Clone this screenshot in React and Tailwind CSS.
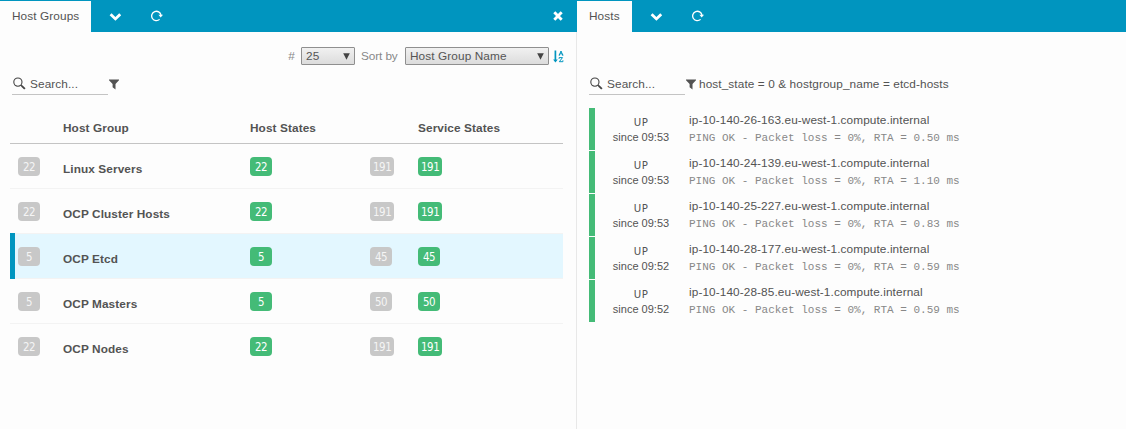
import React from "react";

const groups = [
  { name: "Linux Servers", hosts: 22, services: 191 },
  { name: "OCP Cluster Hosts", hosts: 22, services: 191 },
  { name: "OCP Etcd", hosts: 5, services: 45, active: true },
  { name: "OCP Masters", hosts: 5, services: 50 },
  { name: "OCP Nodes", hosts: 22, services: 191 },
];

const hosts = [
  { name: "ip-10-140-26-163.eu-west-1.compute.internal", since: "09:53", rta: "0.50" },
  { name: "ip-10-140-24-139.eu-west-1.compute.internal", since: "09:53", rta: "1.10" },
  { name: "ip-10-140-25-227.eu-west-1.compute.internal", since: "09:53", rta: "0.83" },
  { name: "ip-10-140-28-177.eu-west-1.compute.internal", since: "09:52", rta: "0.59" },
  { name: "ip-10-140-28-85.eu-west-1.compute.internal", since: "09:52", rta: "0.59" },
];

function Chevron() {
  return (
    <svg className="h-[8px] w-[12px]" viewBox="0 0 12 8" fill="none">
      <path d="M1.6 1.2 6.4 5.9l4.8-4.7" stroke="#fff" strokeWidth="2.8" />
    </svg>
  );
}

function Reload() {
  return (
    <svg className="h-[12px] w-[12px]" viewBox="0 0 12 12">
      <path d="M8.6 9.4A4.7 4.7 0 1 1 10 5.2" fill="none" stroke="#fff" strokeWidth="1.3" />
      <path d="M7.4 4.8H12L9.7 7.4z" fill="#fff" />
    </svg>
  );
}

function Close() {
  return (
    <svg className="h-[10px] w-[10px]" viewBox="0 0 10 10">
      <path d="M1.3 1.3l7.4 7.4M8.7 1.3L1.3 8.7" stroke="#fff" strokeWidth="2.9" />
    </svg>
  );
}

function Magnifier() {
  return (
    <svg className="mt-px h-[13px] w-[13px]" viewBox="0 0 13 13" fill="none">
      <circle cx="4.9" cy="5.1" r="4.1" stroke="#444" strokeWidth="1.1" />
      <path d="M7.8 8l1.2 1.2" stroke="#444" strokeWidth="1.1" />
      <path d="M8.7 8.9l3.2 3" stroke="#444" strokeWidth="1.9" />
    </svg>
  );
}

function Funnel() {
  return (
    <svg className="h-[11px] w-[10px]" viewBox="0 0 10 11">
      <path d="M0 .4h10v.9L6.5 5v5.4L3.6 8.3V5L0 1.3z" fill="#535353" />
    </svg>
  );
}

function SortIcon() {
  return (
    <svg className="h-[13px] w-[11px]" viewBox="0 0 11 13" fill="none" stroke="#0095bf">
      <path d="M2.4.5v10.2" strokeWidth="1.7" />
      <path d="M.1 9.5h4.7L2.4 12.6z" fill="#0095bf" stroke="none" />
      <path d="M6.3 5.1 8 1l1.7 4.1M6.9 3.8h2.3M5.7 5.1h1.4M8.9 5.1h1.5" strokeWidth="1" />
      <path d="M6.1 8.8V7.6h3.4L6.3 11.7h3.6v-1.4" strokeWidth="1" />
    </svg>
  );
}

function TabBar({ title, width, closable }) {
  return (
    <header className="flex h-[32px] bg-[#0095bf] pt-px">
      <div className={`${width} h-[31px] bg-[#fdfdfd] pl-3 leading-[30px]`}>{title}</div>
      <div className="flex h-[31px] w-[48px] items-center justify-center pt-px">
        <Chevron />
      </div>
      <div className="flex h-[31px] w-[36px] items-center justify-center pb-px">
        <Reload />
      </div>
      {closable && (
        <div className="mr-[14px] ml-auto flex items-center pb-px">
          <Close />
        </div>
      )}
    </header>
  );
}

function Search() {
  return (
    <div className="flex h-[21px]">
      <div className="flex w-[96px] items-start border-b border-[#c4c4c4]">
        <span className="mr-[4px] ml-px pt-[2px]">
          <Magnifier />
        </span>
        <span className="leading-[20px]">Search...</span>
      </div>
      <span className="ml-px pt-[5px]">
        <Funnel />
      </span>
    </div>
  );
}

function Select({ value, width }) {
  return (
    <div
      className={`${width} flex h-[18px] items-center justify-between rounded-[1px] border border-[#8f8f8f] bg-linear-to-b from-[#f1f1f1] to-[#dcdcdc] pr-[4px] pl-[4px] text-[#555]`}
    >
      <span className="leading-[16px]">{value}</span>
      <svg className="h-[7px] w-[7px]" viewBox="0 0 7 7">
        <path d="M.2.3h6.6L3.5 6.8z" fill="#444" />
      </svg>
    </div>
  );
}

function Badge({ value, color }) {
  return (
    <span
      className={`${color} flex h-[19px] w-fit min-w-[22px] items-center justify-center rounded-[4px] pt-[2px] pr-[2.8px] pl-[3px] font-['DejaVu_Sans_Condensed','DejaVu_Sans',sans-serif] text-[11.4px] tracking-[-0.45px] [font-stretch:condensed]`}
    >
      {value}
    </span>
  );
}

const columns = "grid grid-cols-[53px_187px_120px_48px_1fr]";

export default function App() {
  return (
    <div className="flex h-[429px] w-[1126px] overflow-hidden bg-[#fdfdfd] font-['Liberation_Sans',Arial,sans-serif] text-[11.8px] tracking-[0.1px] whitespace-nowrap text-[#535353]">
      <section className="w-[577px] shrink-0">
        <TabBar title="Host Groups" width="w-[91px]" closable />
        <div className="h-[397px] border-r border-[#e8e8e8]">
          <div className="flex h-[42px] items-center justify-end pt-[6px] pr-[12px] leading-[16px] text-[#888]">
            <span className="mr-[6px]">#</span>
            <Select value="25" width="w-[54px]" />
            <span className="mr-[8px] ml-[6px] w-[36px] tracking-[-0.1px]">Sort by</span>
            <Select value="Host Group Name" width="w-[144px]" />
            <span className="ml-[4px]">
              <SortIcon />
            </span>
          </div>
          <div className="pl-[12px]">
            <Search />
          </div>
          <div className="mt-[18px] mr-[13px] ml-[10px]">
            <div className={`${columns} h-[31px] border-b border-[#c4c4c4] leading-[30px] font-bold`}>
              <span className="col-start-2">Host Group</span>
              <span>Host States</span>
              <span className="col-start-5">Service States</span>
            </div>
            {groups.map((g, i) => (
              <div
                key={g.name}
                className={`${columns} relative h-[45px] items-start pt-[13px] ${g.active ? "bg-[#e3f7ff]" : ""} ${
                  i < groups.length - 1 ? "border-b border-[#f3f3f3]" : ""
                }`}
              >
                {g.active && <span className="absolute -top-px left-0 h-[46px] w-[5px] bg-[#0095bf]" />}
                <span className="pl-[8px] text-[#f5f5f5]">
                  <Badge value={g.hosts} color="bg-[#c8c8c8]" />
                </span>
                <span className="pt-[2px] leading-[20px] font-bold">{g.name}</span>
                <span className="text-white">
                  <Badge value={g.hosts} color="bg-[#44bb77]" />
                </span>
                <span className="text-[#f5f5f5]">
                  <Badge value={g.services} color="bg-[#c8c8c8]" />
                </span>
                <span className="text-white">
                  <Badge value={g.services} color="bg-[#44bb77]" />
                </span>
              </div>
            ))}
          </div>
        </div>
      </section>
      <section className="min-w-0 flex-1">
        <TabBar title="Hosts" width="w-[55px]" />
        <div className="flex pt-[42px] pl-[12px]">
          <Search />
          <span className="ml-[3px] leading-[20px]">host_state = 0 &amp; hostgroup_name = etcd-hosts</span>
        </div>
        <div className="mt-[13px] ml-[12px] flex flex-col gap-px">
          {hosts.map((h) => (
            <div key={h.name} className="flex h-[42px] border-l-[6px] border-[#44bb77]">
              <div className="flex w-[92px] flex-col items-center pt-[4px] text-[11px] leading-[17px] tracking-normal">
                <span className="pt-[2px] font-['DejaVu_Sans_Condensed','DejaVu_Sans',sans-serif] text-[11.3px] tracking-[0.4px] [font-stretch:condensed]">
                  UP
                </span>
                <span className="-mt-[2px]">since {h.since}</span>
              </div>
              <div className="pt-[4px] pl-[2px] leading-[17px]">
                <div>{h.name}</div>
                <div className="pt-px font-['Liberation_Mono',monospace] text-[11px] tracking-normal text-[#888]">
                  PING OK - Packet loss = 0%, RTA = {h.rta} ms
                </div>
              </div>
            </div>
          ))}
        </div>
      </section>
    </div>
  );
}
